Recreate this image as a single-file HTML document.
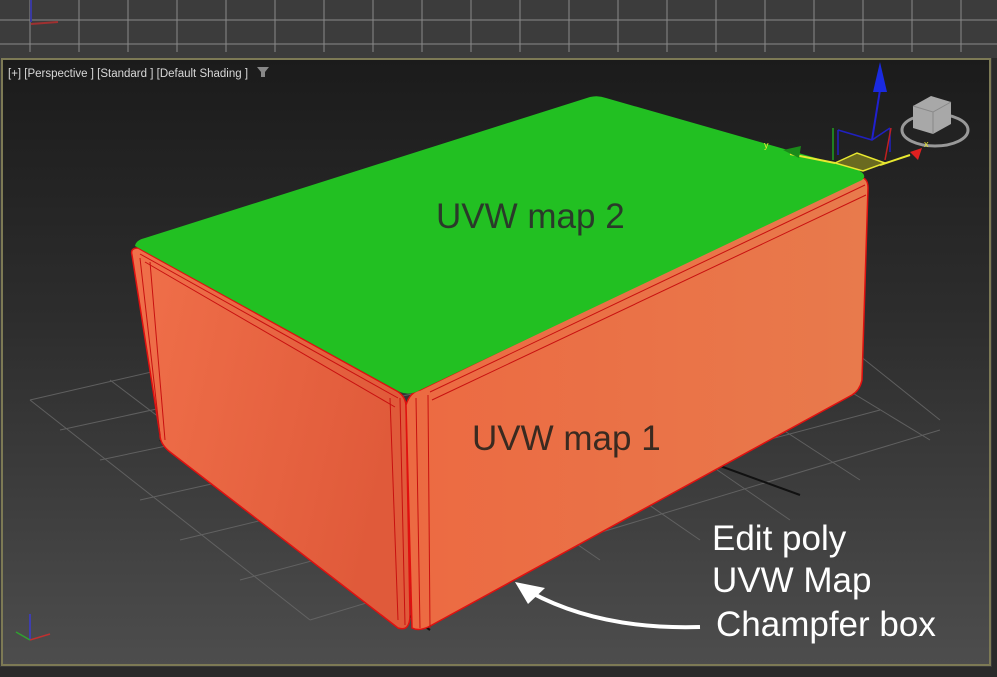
<!DOCTYPE html>
<html><head><style>
body{margin:0;width:997px;height:677px;overflow:hidden;background:#3a3a3a}
</style></head><body>
<svg width="997" height="677" viewBox="0 0 997 677" xmlns="http://www.w3.org/2000/svg" style="display:block">
<defs>
<linearGradient id="bg" x1="0" y1="0" x2="0" y2="1">
<stop offset="0" stop-color="#1b1b1b"/><stop offset="0.45" stop-color="#2e2e2e"/><stop offset="1" stop-color="#4d4d4d"/></linearGradient>
<linearGradient id="lf" x1="0" y1="0" x2="1" y2="0.3">
<stop offset="0" stop-color="#f0704a"/><stop offset="1" stop-color="#e05a3a"/></linearGradient>
<linearGradient id="rf" x1="0" y1="0" x2="1" y2="0">
<stop offset="0" stop-color="#ec6a42"/><stop offset="1" stop-color="#e87a4c"/></linearGradient>
</defs>
<rect x="0" y="0" width="997" height="58" fill="#3c3c3c"/>
<g stroke="#8a8a8a" stroke-width="1">
<line x1="0" y1="20" x2="997" y2="20"/><line x1="0" y1="44" x2="997" y2="44"/>
<path d="M30 0V52M79 0V52M128 0V52M177 0V52M226 0V52M275 0V52M324 0V52M373 0V52M422 0V52M471 0V52M520 0V52M569 0V52M618 0V52M667 0V52M716 0V52M765 0V52M814 0V52M863 0V52M912 0V52M961 0V52"/>
</g>
<line x1="31" y1="0" x2="31" y2="22" stroke="#3a3aa0" stroke-width="2"/>
<line x1="31" y1="24" x2="58" y2="22" stroke="#a03030" stroke-width="2"/>
<rect x="2" y="59" width="988" height="606" fill="url(#bg)" stroke="#7d7a55" stroke-width="2"/>
<rect x="992" y="58" width="5" height="619" fill="#2a2a2a"/>
<rect x="0" y="667" width="997" height="10" fill="#2a2a2a"/>
<g stroke="#6a6a6a" stroke-width="1" fill="none" opacity="0.8">
<path d="M30 400L420 310M60 430L520 330M100 460L620 350M140 500L720 370M180 540L800 390M240 580L880 410M310 620L940 430"/>
<path d="M30 400L310 620M110 380L400 600M190 360L500 580M280 340L600 560M380 320L700 540M470 300L790 520M560 285L860 480M650 270L930 440M740 260L940 420"/>
</g>
<line x1="160" y1="440" x2="430" y2="630" stroke="#111" stroke-width="2"/>
<line x1="690" y1="455" x2="800" y2="495" stroke="#111" stroke-width="2"/>
<path d="M132 255 Q130 248 138 248 L395 390 Q405 395 406 405 L410 615 Q410 632 398 628 L170 452 Q160 444 160 435 Z" fill="url(#lf)" stroke="#e01010" stroke-width="1.5"/>
<path d="M406 405 Q410 392 420 390 L858 178 Q868 176 868 188 L862 380 Q860 390 852 395 L432 625 Q420 632 412 628 Z" fill="url(#rf)" stroke="#e01010" stroke-width="1.5"/>
<g stroke="#c81010" stroke-width="1" fill="none">
<path d="M140 258L160 435M150 262L165 440"/>
<path d="M390 398L398 620M400 398L405 625M416 398L420 628M428 395L430 628"/>
<path d="M430 392L865 185M432 400L866 195"/>
<path d="M140 254L398 398M145 262L395 407"/>
</g>
<path d="M135 246 Q136 240 145 238 L590 97 Q598 95 606 98 L858 170 Q868 175 862 180 L420 390 Q410 396 400 392 Z" fill="#22c022"/>
<text x="436" y="228" font-family="Liberation Sans,sans-serif" font-size="35" fill="#2a3a2a">UVW map 2</text>
<text x="472" y="450" font-family="Liberation Sans,sans-serif" font-size="35" fill="#3a2a20">UVW map 1</text>
<g font-family="Liberation Sans,sans-serif" font-size="35" fill="#fff">
<text x="712" y="550">Edit poly</text>
<text x="712" y="592">UVW Map</text>
<text x="716" y="636">Champfer box</text>
</g>
<path d="M700 627 Q600 630 530 592" stroke="#fff" stroke-width="4" fill="none"/>
<path d="M515 582 L545 588 L528 604 Z" fill="#fff"/>
<text x="8" y="77" font-family="Liberation Sans,sans-serif" font-size="11.5" fill="#d8d8d8">[+] [Perspective ] [Standard ] [Default Shading ]</text>
<path d="M257 67h12l-4 5v5h-4v-5z" fill="#888"/>
<line x1="880" y1="90" x2="872" y2="140" stroke="#2020d0" stroke-width="2"/>
<path d="M880 62l-7 30h14z" fill="#1a2ae0"/>
<path d="M838 155V130M838 130l34 10 18-12M890 128v24" stroke="#2020c0" stroke-width="1.5" fill="none"/>
<line x1="833" y1="160" x2="833" y2="128" stroke="#20a020" stroke-width="1.5"/>
<line x1="885" y1="160" x2="891" y2="128" stroke="#c02020" stroke-width="1.5"/>
<line x1="790" y1="154" x2="835" y2="163" stroke="#e8e830" stroke-width="2"/>
<line x1="880" y1="165" x2="910" y2="155" stroke="#e8e830" stroke-width="2"/>
<path d="M783 150l18 -4 -2 12z" fill="#1a8a1a"/>
<path d="M910 152l12 -4 -4 12z" fill="#e02020"/>
<path d="M835 163l22-10 28 10-22 8z" fill="#6a6a20" stroke="#e8e830" stroke-width="1.5"/>
<ellipse cx="935" cy="130" rx="33" ry="16" fill="#222" stroke="#999" stroke-width="3"/>
<path d="M913 106l18-10 20 6v22l-18 10-20-6z" fill="#a8a8a8"/>
<path d="M913 106l20 6 18-10M933 112v22" stroke="#888" fill="none"/>
<text x="764" y="148" font-size="9" fill="#e8e830" font-family="Liberation Sans,sans-serif">y</text>
<text x="924" y="147" font-size="9" fill="#e8e830" font-family="Liberation Sans,sans-serif">x</text>
<line x1="30" y1="640" x2="30" y2="614" stroke="#3a3ad0" stroke-width="1.5"/>
<line x1="30" y1="640" x2="50" y2="634" stroke="#c03030" stroke-width="1.5"/>
<line x1="30" y1="640" x2="16" y2="632" stroke="#30a030" stroke-width="1.5"/>
</svg>
</body></html>
